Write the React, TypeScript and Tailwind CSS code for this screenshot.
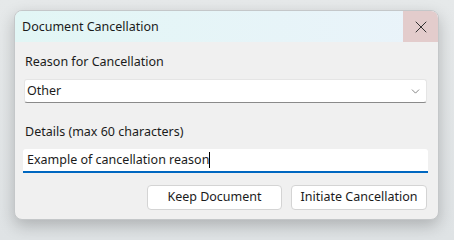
import { X, ChevronDown } from 'lucide-react';

export default function App() {
    return (
        <div
            className="w-[454px] h-[240px] bg-gradient-to-b from-[#e6e9ea] to-[#dfe3e5] pt-[10px] pl-[14px]"
            style={{ fontFamily: '"Noto Sans", sans-serif' }}
        >
            <div className="w-[425px] h-[210px] rounded-lg border border-[#c4c7c9] bg-[#f0f0f0] shadow-[0_6px_16px_rgba(0,0,0,0.22)] overflow-hidden flex flex-col">
                <div className="h-[31px] flex items-stretch bg-gradient-to-r from-[#e2f6f5] to-[#eaf3fa]">
                    <div className="flex-1 flex items-center pl-[7px] pt-[1px] text-[12.5px] text-[#1b1b1b]">Document Cancellation</div>
                    <div className="w-[35px] flex items-center justify-center bg-[#e3cccc]">
                        <X size={20} strokeWidth={1.1} className="text-[#222]" />
                    </div>
                </div>

                <div className="flex-1 pl-[9px] pr-[11px] pt-[11px] text-[12.5px] text-[#1b1b1b]">
                    <div className="pl-[1px] leading-[18px]">Reason for Cancellation</div>
                    <div className="mt-[8px] h-[24px] flex items-center justify-between bg-white border border-[#e5e5e5] border-b-[#8a8a8a] rounded-[3px] pl-[2px] pr-[4px]">
                        <span>Other</span>
                        <ChevronDown size={13} strokeWidth={1.3} className="text-[#555]" />
                    </div>

                    <div className="mt-[20px] pl-[1px] leading-[18px]">Details (max 60 characters)</div>
                    <div className="mt-[8px] -mx-[1px] h-[24px] flex items-center bg-white border-b-2 border-[#0067c0] rounded-t-[3px] pl-[4px]">
                        <span>Example of cancellation reason</span>
                        <span className="w-px h-[16px] bg-black" />
                    </div>

                    <div className="mt-[12px] flex justify-end gap-[9px]">
                        <button className="w-[135px] h-[25px] bg-white border border-[#d4d4d4] rounded-[4px] text-[12.5px] text-[#1b1b1b]">
                            Keep Document
                        </button>
                        <button className="w-[136px] h-[25px] bg-white border border-[#d4d4d4] rounded-[4px] text-[12.5px] text-[#1b1b1b]">
                            Initiate Cancellation
                        </button>
                    </div>
                </div>
            </div>
        </div>
    );
}
